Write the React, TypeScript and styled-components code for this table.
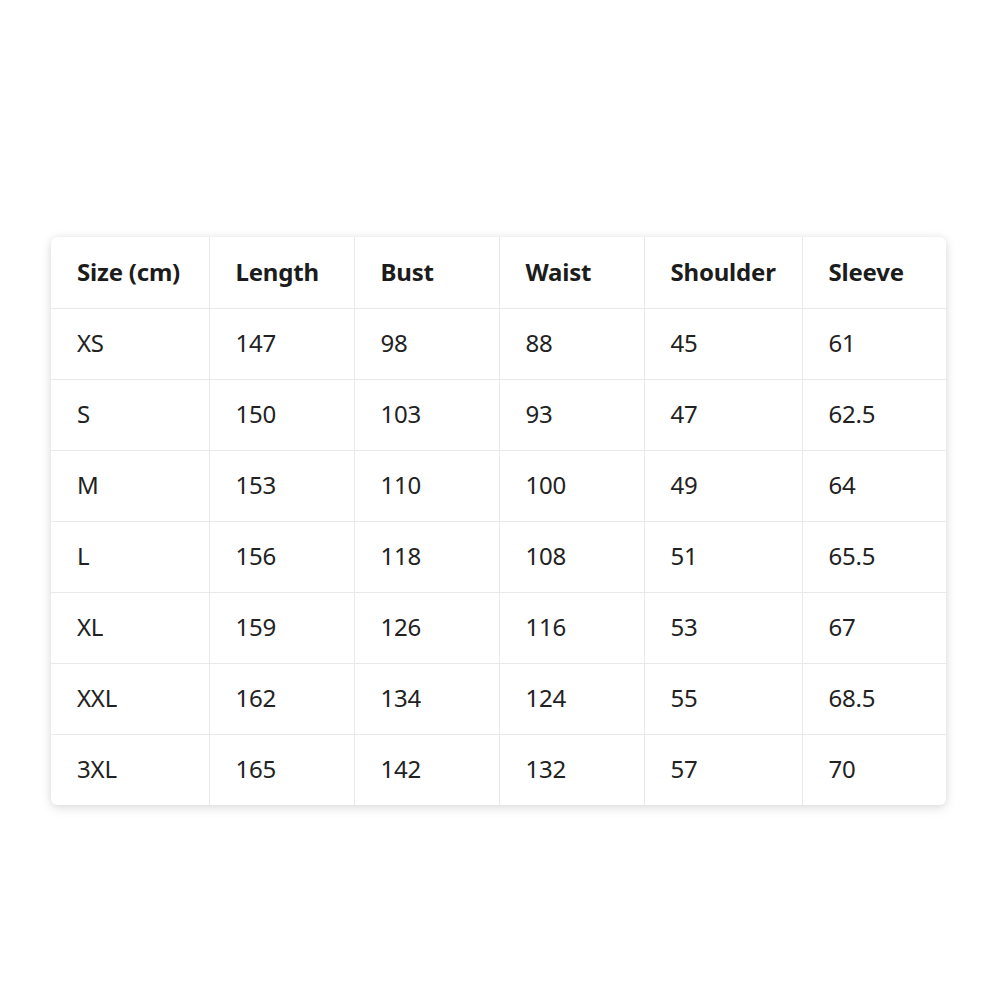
import styled, { createGlobalStyle } from 'styled-components';

const GlobalStyle = createGlobalStyle`
  html, body {
    margin: 0;
    padding: 0;
    background: #ffffff;
  }
  body {
    font-family: 'Noto Sans', 'Open Sans', sans-serif;
    color: #1c1c1c;
  }
`;

const headers = ['Size (cm)', 'Length', 'Bust', 'Waist', 'Shoulder', 'Sleeve'];
const colWidths = [158, 145, 145, 145, 158, 144];

const rows = [
  ['XS', '147', '98', '88', '45', '61'],
  ['S', '150', '103', '93', '47', '62.5'],
  ['M', '153', '110', '100', '49', '64'],
  ['L', '156', '118', '108', '51', '65.5'],
  ['XL', '159', '126', '116', '53', '67'],
  ['XXL', '162', '134', '124', '55', '68.5'],
  ['3XL', '165', '142', '132', '57', '70'],
];

const App = () => {
  return (
    <Page>
      <GlobalStyle />
      <Card>
        <Table>
          <colgroup>
            {colWidths.map((w, i) => (
              <col key={i} style={{ width: w }} />
            ))}
          </colgroup>
          <thead>
            <tr>
              {headers.map((h) => (
                <HeadCell key={h}>{h}</HeadCell>
              ))}
            </tr>
          </thead>
          <tbody>
            {rows.map((row) => (
              <tr key={row[0]}>
                {row.map((value, i) => (
                  <Cell key={i}>{value}</Cell>
                ))}
              </tr>
            ))}
          </tbody>
        </Table>
      </Card>
    </Page>
  );
};

export default App;

const Page = styled.div`
  display: flex;
  align-items: flex-start;
  justify-content: flex-start;
  padding: 237px 0 0 51px;
  box-sizing: border-box;
  width: 1000px;
  min-height: 1000px;
`;

const Card = styled.div`
  width: 895px;
  background: #fff;
  border-radius: 6px;
  overflow: hidden;
  box-shadow: 0 3px 12px rgba(0, 0, 0, 0.12), 0 0 6px rgba(0, 0, 0, 0.06);
`;

const Table = styled.table`
  width: 100%;
  border-collapse: collapse;
  table-layout: fixed;

  tr:last-child td {
    border-bottom: none;
  }
  td:last-child,
  th:last-child {
    border-right: none;
  }
`;

const HeadCell = styled.th`
  height: 71px;
  box-sizing: border-box;
  padding: 0 0 2px 26px;
  text-align: left;
  font-size: 24px;
  font-weight: 700;
  letter-spacing: -0.2px;
  white-space: nowrap;
  border-right: 1px solid #e9e9e9;
  border-bottom: 1px solid #e9e9e9;
`;

const Cell = styled.td`
  height: 71px;
  box-sizing: border-box;
  padding: 0 0 2px 26px;
  font-size: 24px;
  font-weight: 400;
  letter-spacing: -0.2px;
  color: #222;
  border-right: 1px solid #e9e9e9;
  border-bottom: 1px solid #e9e9e9;
`;
